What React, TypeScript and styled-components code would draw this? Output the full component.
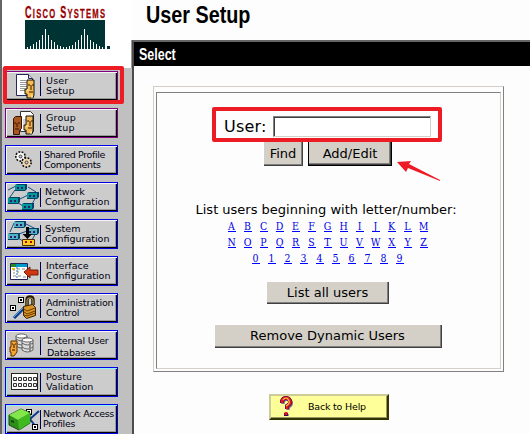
import React from "react";
import styled, { createGlobalStyle } from "styled-components";

const Global = createGlobalStyle`
  html, body { margin: 0; padding: 0; background: #fff; overflow: hidden; }
  * { box-sizing: border-box; }
`;

const Page = styled.div`
  display: grid;
  grid-template-columns: 132px 398px;
  width: 530px;
  height: 434px;
  overflow: hidden;
  background: #fdfdfd;
  font-family: "DejaVu Sans", sans-serif;
`;

const Sidebar = styled.aside`
  border-left: 2px solid #666;
  display: flex;
  flex-direction: column;
  height: 434px;
  overflow: hidden;
`;

const Brand = styled.div`
  flex: none;
  height: 68px;
  background: #fff;
  padding: 4px 0 0 23px;
`;

const BrandName = styled.div`
  height: 16px;
  width: max-content;
  font: bold 16px/17px "Liberation Sans", sans-serif;
  color: #900;
  white-space: nowrap;
  transform: scaleX(0.565);
  transform-origin: left;
  letter-spacing: 2.2px;
  -webkit-text-stroke: 0.3px #900;
  small { font-size: 13.5px; }
`;

const Nav = styled.nav`
  position: relative;
  flex: 1;
  display: flex;
  flex-direction: column;
  gap: 7px;
  padding: 3px 0 0 3px;
  background: #c0c0c0;
`;

const NavButton = styled.button<{ $edge: string; $dotted?: boolean }>`
  flex: none;
  display: flex;
  width: 113px;
  height: 30px;
  padding: 0;
  border: 1px solid ${(p) => p.$edge};
  background: #ccc;
  box-shadow: inset 1px 1px ${(p) => (p.$dotted ? "#8ff4fa" : "#f5f5f5")}, inset -1px -1px #000,
    inset -2px -2px #999;
  font-family: inherit;
  text-align: left;
`;

const IconBox = styled.svg`
  flex: none;
  display: block;
  width: 34px;
  height: 28px;
`;

const NavLabel = styled.span<{ $indent: number; $line: number; $spacing: number }>`
  display: block;
  padding-top: 4px;
  padding-left: ${(p) => p.$indent}px;
  font-size: 9.5px;
  line-height: ${(p) => p.$line}px;
  letter-spacing: ${(p) => p.$spacing}px;
  color: #000010;
  white-space: pre;
`;

const NavHighlight = styled.div`
  position: absolute;
  left: 1px;
  top: -2px;
  width: 121px;
  height: 38px;
  border: 4px solid #ed1c24;
  border-radius: 2px;
`;

const Main = styled.main`
  display: flex;
  flex-direction: column;
  height: 434px;
`;

const Title = styled.h1`
  flex: none;
  margin: 0;
  height: 40px;
  padding: 0 0 0 14px;
  font: bold 23px/31px "Liberation Sans", sans-serif;
  color: #000;
  span { display: inline-block; transform: scaleX(0.86); transform-origin: left; }
`;

const Frame = styled.section`
  flex: 1;
  border-left: 2px solid #4c4c4c;
  border-top: 2px solid #666;
  background: #fdfdfd;
  box-shadow: -1px 0 #999;
`;

const Bar = styled.h2`
  margin: 0;
  height: 24px;
  padding-left: 5px;
  background: #000;
  color: #fff;
  font: bold 16px/25px "Liberation Sans", sans-serif;
  span { display: inline-block; transform: scaleX(0.78); transform-origin: left; }
`;

const OuterBox = styled.div`
  width: 351px;
  height: 286px;
  margin: 20px 0 0 19px;
  padding: 5px 2px 2px;
  border: 1px solid;
  border-color: #d4d0c8 #808080 #808080 #d4d0c8;
`;

const InnerBox = styled.form`
  display: flex;
  flex-direction: column;
  align-items: center;
  width: 345px;
  height: 277px;
  padding-right: 2px;
  border: 1px solid;
  border-color: #808080 #d4d0c8 #d4d0c8 #808080;
`;

const UserRow = styled.label`
  position: relative;
  display: flex;
  align-items: center;
  width: 207px;
  height: 21px;
  margin-top: 23px;
  font-size: 16px;
  letter-spacing: 0.2px;
  line-height: 21px;
  > span { width: 49px; }
`;

const UserInput = styled.input`
  width: 158px;
  height: 21px;
  padding: 0;
  border: 1px solid;
  border-color: #808080 #d4d0c8 #d4d0c8 #808080;
  box-shadow: inset 1px 1px #404040;
  background: #fff;
`;

const FieldHighlight = styled.i`
  position: absolute;
  z-index: 1;
  left: -12px;
  top: -9px;
  width: 230px;
  height: 35px;
  border: 4px solid #ed1c24;
  border-radius: 2px;
`;

const Actions = styled.div`
  position: relative;
  display: flex;
  gap: 5px;
  margin-top: 4px;
  width: 129px;
`;

const Arrow = styled.svg`
  position: absolute;
  left: 133px;
  top: 20px;
  width: 46px;
  height: 22px;
`;

const FormButton = styled.button<{ $w: number; $h: number; $focus?: boolean }>`
  flex: none;
  width: ${(p) => p.$w}px;
  height: ${(p) => p.$h}px;
  padding: 0;
  border: ${(p) => (p.$focus ? "1px solid #000" : "0")};
  background: #d4d0c8;
  box-shadow: ${(p) => (p.$focus ? "" : "inset 1px 1px #fff,")} inset -1px -1px #404040,
    inset -2px -2px #808080;
  color: #000;
  font: 13px/20px "DejaVu Sans", sans-serif;
`;

const Hint = styled.p`
  margin: 35px 0 0;
  width: 264px;
  height: 17px;
  font-size: 13px;
  line-height: 17px;
  white-space: nowrap;
`;

const Letters = styled.div`
  display: flex;
  justify-content: center;
  gap: 8px;
  height: 16px;
`;

const Letter = styled.a`
  display: flex;
  justify-content: center;
  width: 8px;
  height: 13px;
  border-bottom: 1px solid #00f;
  color: #0000e6;
  text-decoration: none;
  font: 10.5px/14px "DejaVu Serif Condensed", "DejaVu Serif", serif;
  font-stretch: condensed;
`;

const Spacer = styled.div<{ $h: number }>`
  flex: none;
  height: ${(p) => p.$h}px;
`;

const HelpButton = styled.button`
  display: flex;
  align-items: center;
  width: 120px;
  height: 26px;
  margin: 22px 0 0 135px;
  padding: 0 0 1px 8px;
  border: 2px solid;
  border-color: #cc9 #333300 #333300 #cc9;
  background: #ff9;
  box-shadow: inset -1px -1px #996;
  color: #000;
  font: 9.5px/12px "DejaVu Sans", sans-serif;
  letter-spacing: -0.2px;
  white-space: nowrap;
  svg { flex: none; width: 14px; height: 21px; margin-right: 15px; }
`;

const Face = ({ x, y, fill }: { x: number; y: number; fill: string }) => (
  <g>
    <path d={`M${x + 1} ${y}h7v15l-1 3h-6v-4h-2v-5h2z`} fill={fill} stroke="#111" />
    <path d={`M${x + 2} ${y + 5}h2M${x + 6} ${y + 5}h2M${x + 5} ${y + 5}v5M${x + 3} ${y + 12}h4`} stroke="#351300" />
    <path d={`M${x + 1} ${y + 10}h2M${x + 6} ${y + 15}v3`} stroke="#fff2bb" />
  </g>
);

const Device = ({ x, y, fill = "#009999" }: { x: number; y: number; fill?: string }) => (
  <g>
    <path d={`M${x} ${y + 1}l2-1h10v5l-2 2h-10z`} fill="#063f68" />
    <path d={`M${x} ${y + 1}h10v5h-10z`} fill={fill} />
    <path d={`M${x + 2} ${y + 3}h2v2h-2zM${x + 6} ${y + 3}h2v2h-2z`} fill="#321c65" />
  </g>
);

const Cylinder = ({ x, y }: { x: number; y: number }) => (
  <g stroke="#444" strokeWidth=".8">
    <path d={`M${x} ${y + 2}v10q5.5 4 11 0v-10`} fill="#ddd" />
    <ellipse cx={x + 5.5} cy={y + 2} rx="5.5" ry="2" fill="#fff" />
    <path d={`M${x} ${y + 5}q5.5 4 11 0M${x} ${y + 9}q5.5 4 11 0`} fill="none" />
    <path d={`M${x + 8} ${y + 4}v9`} stroke="#888" strokeWidth="2" />
  </g>
);

const Node = ({ x, y }: { x: number; y: number }) => (
  <g>
    <path d={`M${x} ${y}h6v6h-6z`} fill="#000" />
    <path d={`M${x + 1} ${y + 1}h4v4h-4z`} fill="#fff" />
    <path d={`M${x + 2} ${y + 2}h2v2h-2z`} fill="#000" />
  </g>
);

const Doc = () => (
  <>
    <path d="M10.5 2.5h12l4 4v17h-16z" fill="#fff" stroke="#27275c" />
    <path d="M22.5 2.5v4h4" fill="#ddd" stroke="#27275c" />
    <path d="M14 8.5h6M14 10.5h8M14 12.5h6M14 14.5h7M14 16.5h5M14 18.5h5" stroke="#999" />
  </>
);

const Gear = ({ x, y, fill }: { x: number; y: number; fill: string }) => (
  <g transform={`translate(${x} ${y})`}>
    <circle r="4.2" fill={fill} stroke="#111" strokeWidth="2.600" strokeDasharray="1.6 1.3" />
    <circle r="3" fill="none" stroke={fill} strokeWidth="1.600" />
    <circle r="1.500" fill="#ccc" stroke="#222" strokeWidth=".8" />
  </g>
);

const icons: Record<string, React.ReactNode> = {
  user: <><Doc /><Face x={20} y={8} fill="#f7bd50" /></>,
  group: (
    <>
      <path d="M14.500 2.500h10l3 3v17h-13z" fill="#fff" stroke="#333" />
      <path d="M17 11h3M17 13h2M17 15h2" stroke="#aaa" />
      <path d="M7.500 9.500l2-2h6v12l-2 2v4h-6z" fill="#a95721" stroke="#351500" />
      <path d="M8 14h2M12 14h2M11 14v4M9 20h4" stroke="#3b1402" />
      <Face x={19} y={7} fill="#f3b657" />
    </>
  ),
  shared: <><Gear x={14.5} y={10.5} fill="#fff" /><Gear x={20.5} y={16.5} fill="#f4dab0" /></>,
  network: (
    <>
      <path d="M10 3L2 7M9 7L4 14M22 4L30 9M12 17L22 12M9 18L17 23M30 14L26 21" stroke="#164e87" fill="none" />
      <Device x={9} y={1} /><Device x={21} y={9} /><Device x={2} y={14} /><Device x={16} y={20} />
    </>
  ),
  system: (
    <>
      <path d="M8 3L4 12M18 3L30 9M10 15L24 10M10 17L17 21M31 11L26 20" stroke="#164e87" fill="none" />
      <Device x={8} y={1} fill="#50b3c2" /><Device x={21} y={8} fill="#50b3c2" /><Device x={2} y={13} fill="#50b3c2" />
      <path d="M20 7h3v7h3l-4.5 5-5-5h3.5z" fill="#000" />
      <path d="M16.500 19.500h12v6h-12z" fill="#ffcc20" stroke="#542a00" /><path d="M19 21h2v2h-2zM24 21h2v2h-2z" fill="#b20000" />
    </>
  ),
  interface: (
    <>
      <path d="M4.500 6.500h17v16h-17z" fill="#fff" stroke="#225" />
      <path d="M5 7h5v3H5z" fill="#248929" /><path d="M10 7h11v3H10z" fill="#009bcc" />
      <path d="M6 11h3v2H6z" fill="#fc0" />
      <path d="M7 13h2M11 12h3M16 12h3M7 16h2M11 15h2M7 19h3M12 19h3M17 20h3" stroke="#888" />
      <path d="M11 10v12" stroke="#36a" strokeDasharray="2 1" />
      <path d="M18 15l6-5v3h8v5h-8v3z" fill="#cf3811" stroke="#76200d" />
    </>
  ),
  admin: (
    <>
      <path d="M8 24l10-10" stroke="#0b3b90" strokeWidth="3" /><path d="M8 23l10-10" stroke="#51a5cf" />
      <Node x={12} y={3} /><Node x={4} y={11} />
      <path d="M21 13V6q0-3 3-3t3 3v5" fill="none" stroke="#301d00" strokeWidth="3.500" />
      <path d="M21 13V6q0-2 3-2t3 2v5" fill="none" stroke="#aaa86b" />
      <path d="M17.500 12.500l9-2 3 3v8l-9 3-3-3z" fill="#d99622" stroke="#3b2300" />
      <path d="M18 15l3 2 8-3M18 18l3 2 8-3M18 21l3 1 8-3" stroke="#6c3a00" fill="none" />
    </>
  ),
  external: (
    <>
      <Cylinder x={10} y={3} /><Cylinder x={16} y={7} />
      <path d="M5 10h6v11l-3 4H5v-4H4v-5h1z" fill="#f5a632" stroke="#5b2b00" />
      <path d="M6 13h1M9 13h1M8 13v4M6 19h3" stroke="#351300" />
    </>
  ),
  posture: (
    <>
      <path d="M5 5h27v17H5z" fill="#222" /><path d="M6 6h25v15H6z" fill="#fff" />
      {[0, 1].flatMap((r) => [0, 1, 2, 3, 4].map((c) => (
        <path key={`${r}${c}`} d={`M${7.5 + c * 5} ${9.5 + r * 6}h3v3h-3z`} fill="#eee" stroke="#333" />
      )))}
    </>
  ),
  profiles: (
    <>
      <path d="M24 14l9-8M24 14l6 8" stroke="#0b3b90" strokeWidth="2" />
      <Node x={20} y={4} /><Node x={26} y={19} />
      <path d="M3 10L15 4l9 4v10l-11 7-10-5z" fill="#2b8f18" stroke="#174b14" />
      <path d="M3 10L15 4l9 4-12 7z" fill="#83e64c" /><path d="M12 15l12-7v10l-11 7z" fill="#41b921" />
      <path d="M5 15l3 1v2l-3-1z" fill="#123e16" />
    </>
  ),
};

type Item = { id: string; text: string; x: number; edge?: string; line?: number; gap?: number; dotted?: boolean };
const items: Item[] = [
  { id: "user", text: "User\nSetup", x: 46, edge: "#800080", gap: 0.2 },
  { id: "group", text: "Group\nSetup", x: 46, edge: "#800080", gap: 0.2 },
  { id: "shared", text: "Shared Profile\nComponents", x: 44, gap: -0.35 },
  { id: "network", text: "Network\nConfiguration", x: 45, gap: 0 },
  { id: "system", text: "System\nConfiguration", x: 45, gap: 0 },
  { id: "interface", text: "Interface\nConfiguration", x: 46, gap: 0 },
  { id: "admin", text: "Administration\nControl", x: 46, gap: -0.15 },
  { id: "external", text: "External User\nDatabases", x: 47, line: 12, gap: -0.2 },
  { id: "posture", text: "Posture\nValidation", x: 46, gap: 0.05, dotted: true },
  { id: "profiles", text: "Network Access\nProfiles", x: 43, gap: -0.3, dotted: true },
];

const barHeights = [2, 3, 5, 7, 9, 14, 20, 14, 9, 7, 4, 3, 2, 2, 3, 4, 7, 9, 14, 20, 14, 9, 7, 5, 3, 2];
const rows = ["ABCDEFGHIJKLM", "NOPQRSTUVWXYZ", "0123456789"];

export default function App() {
  return (
    <>
      <Global />
      <Page>
        <Sidebar>
          <Brand>
            <BrandName>C<small>ISCO</small> S<small>YSTEMS</small></BrandName>
            <svg width="85" height="29" shapeRendering="crispEdges" display="block">
              <path d="M0 0h80v29H0zM82 26h3v3h-3z" fill="#003434" />
              {barHeights.map((h, i) => <rect key={i} x={2 + i * 3} y={29 - h} width="1" height={h} fill="#fff" />)}
            </svg>
          </Brand>
          <Nav>
            {items.map((it) => (
              <NavButton key={it.id} $edge={it.edge ?? "#0000e8"} $dotted={it.dotted}>
                <IconBox viewBox="0 0 34 28" fill="none">
                  {icons[it.id]}
                </IconBox>
                <svg width="2" height="28" display="block"><path d="M.5 5v19" stroke="#000050" /></svg>
                <NavLabel $indent={it.x - 42} $line={it.line ?? 10} $spacing={it.gap ?? 0}>{it.text}</NavLabel>
              </NavButton>
            ))}
            <NavHighlight />
          </Nav>
        </Sidebar>
        <Main>
          <Title><span>User Setup</span></Title>
          <Frame>
            <Bar><span>Select</span></Bar>
            <OuterBox>
              <InnerBox onSubmit={(e) => e.preventDefault()}>
                <UserRow><span>User:</span><UserInput /><FieldHighlight /></UserRow>
                <Actions>
                  <FormButton type="button" $w={40} $h={25}>Find</FormButton>
                  <FormButton type="button" $w={84} $h={25} $focus>Add/Edit</FormButton>
                  <Arrow viewBox="0 0 46 22"><path d="M1 1l14-1-2 3 31 16v1L12 7l-2 4z" fill="#ed1c24" /></Arrow>
                </Actions>
                <Hint>List users beginning with letter/number:</Hint>
                <Spacer $h={1} />
                {rows.map((row) => (
                  <Letters key={row}>{row.split("").map((c) => <Letter key={c}>{c}</Letter>)}</Letters>
                ))}
                <Spacer $h={14} />
                <FormButton type="button" $w={123} $h={23}>List all users</FormButton>
                <Spacer $h={20} />
                <FormButton type="button" $w={228} $h={24}>Remove Dynamic Users</FormButton>
              </InnerBox>
            </OuterBox>
            <HelpButton>
              <svg viewBox="0 0 14 21" fill="none">
                <path d="M4 8V6q1-3 4-3t4 3-3 5v3M8 18v2" stroke="#77768a" strokeWidth="3.500" />
                <path d="M3 7V5q1-3 4-3t4 3-3 5v3M7 17v3" stroke="#45005f" strokeWidth="4" />
                <path d="M3 7V5q1-3 4-3t4 3-3 5v3M7 16v3" stroke="#e51b18" strokeWidth="2.800" />
                <path d="M4 4q1-2 3-2t3 3-3 5" stroke="#ffc044" strokeWidth="1.200" />
              </svg>
              Back to Help
            </HelpButton>
          </Frame>
        </Main>
      </Page>
    </>
  );
}
